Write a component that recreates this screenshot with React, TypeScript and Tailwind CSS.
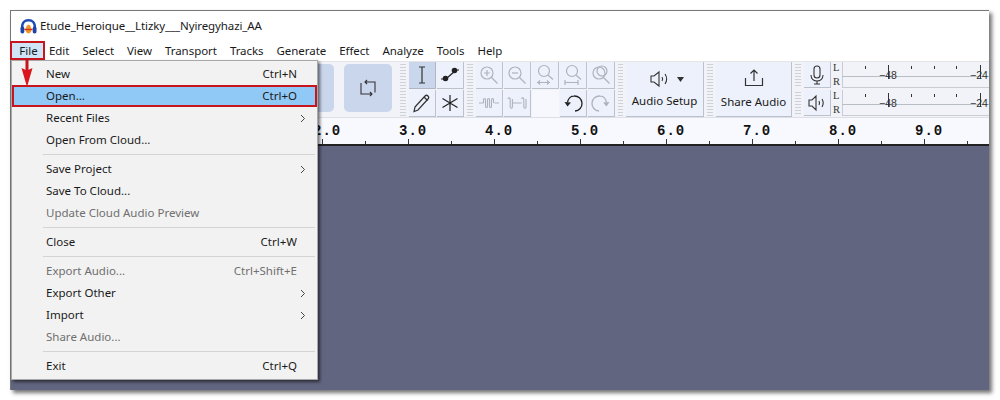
import React from "react";

const FONT = "font-['Noto_Sans','Open_Sans',sans-serif]";

type Entry = { label?: string; shortcut?: string; arrow?: boolean; disabled?: boolean; active?: boolean; sep?: boolean };
const menu: Entry[] = [
  { label: "New", shortcut: "Ctrl+N" },
  { label: "Open...", shortcut: "Ctrl+O", active: true },
  { label: "Recent Files", arrow: true },
  { label: "Open From Cloud..." },
  { sep: true },
  { label: "Save Project", arrow: true },
  { label: "Save To Cloud..." },
  { label: "Update Cloud Audio Preview", disabled: true },
  { sep: true },
  { label: "Close", shortcut: "Ctrl+W" },
  { sep: true },
  { label: "Export Audio...", shortcut: "Ctrl+Shift+E", disabled: true },
  { label: "Export Other", arrow: true },
  { label: "Import", arrow: true },
  { label: "Share Audio...", disabled: true },
  { sep: true },
  { label: "Exit", shortcut: "Ctrl+Q" },
];

const menus = ["Edit", "Select", "View", "Transport", "Tracks", "Generate", "Effect", "Analyze", "Tools", "Help"];

function Grip({ narrow }: { narrow?: boolean }) {
  return (
    <div className={`${narrow ? "w-[9px]" : "w-[10px]"} mx-px shrink-0 self-stretch bg-[#f1f3f8] flex flex-col justify-center gap-[2px] px-[2px] overflow-hidden`}>
      {Array.from({ length: 18 }).map((_, i) => (
        <div key={i} className="h-px shrink-0 bg-[#ced2d8]" />
      ))}
    </div>
  );
}

function Btn({ children, active, plain, tall }: { children?: React.ReactNode; active?: boolean; plain?: boolean; tall?: boolean }) {
  return (
    <div
      className={`w-[27px] ${tall ? "h-[27px]" : "h-[26px]"} flex items-center justify-center ${
        plain
          ? "bg-[#f6f8fd]"
          : active
          ? "bg-[#c9d6ec] border-b border-r border-[#aeb6c4]"
          : "bg-[#edf1fb] border-b border-r border-[#bcc2cc]"
      }`}
    >
      {children}
    </div>
  );
}

const ic = { width: 22, height: 22, viewBox: "0 0 22 22", fill: "none" } as const;
const G = "#adb3bc";

function ZoomIco({ kind }: { kind: "in" | "out" | "sel" | "fit" | "tog" }) {
  const low = kind === "sel" || kind === "fit";
  return (
    <svg {...ic} stroke={G} strokeWidth="1.2">
      <circle cx={low ? 10 : 9} cy={low ? 7 : 9} r={low ? 5.5 : 6} />
      <path d={low ? "M14 11l5 4.500" : "M13.5 13.5l6 6"} />
      {kind === "in" && <path d="M6 9h6M9 6v6" />}
      {kind === "out" && <path d="M6 9h6" />}
      {kind === "sel" && <path d="M3 18.500h13M6 16.500l-2 2 2 2M13 16.500l2 2-2 2" />}
      {kind === "fit" && <path d="M3 18.500h13M3 16v5M16 16v5" />}
      {kind === "tog" && <circle cx="12" cy="7" r="5" />}
    </svg>
  );
}

function LevelMeter() {
  return (
    <div className="flex h-[26px] flex-1 items-stretch">
      <div className="w-[9px] flex flex-col justify-between text-[10.5px] leading-[12px] font-['Liberation_Serif',serif] text-[#333]">
        <span>L</span>
        <span>R</span>
      </div>
      <div className="flex-1 relative">
        <svg width="147" height="26" className="block">
          <path d="M0.5 0v26" stroke="#c9ccd2" />
          <path d="M0 14.500h147" stroke="#b9bdc4" strokeWidth="1" />
          <path d="M0 25.500h147" stroke="#c9ccd2" />
          <path d="M23.500 4v3M69.500 4v3M92.500 4v3M114.500 4v3M46.500 3v14M138.500 3v14" stroke="#333" strokeWidth="1" />
        </svg>
        <span className="absolute left-[37px] top-[7px] text-[10.5px] leading-[12px] font-['Liberation_Sans',sans-serif] text-[#333]">−48</span>
        <span className="absolute left-[128px] top-[7px] text-[10.5px] leading-[12px] font-['Liberation_Sans',sans-serif] text-[#333]">−24</span>
      </div>
    </div>
  );
}

function Logo() {
  return (
    <svg width="17" height="15" viewBox="0 0 17 15" className="shrink-0">
      <path d="M2.200 10 C1.500 3 5 1.300 8.500 1.300 C12 1.300 15.500 3 14.800 10" fill="none" stroke="#1c49b4" strokeWidth="2.400" />
      <rect x="0.500" y="7.500" width="3.800" height="7" rx="1.800" fill="#1b45a8" />
      <rect x="12.700" y="7.500" width="3.800" height="7" rx="1.800" fill="#1b45a8" />
      <path d="M5 10.500L6 8.500 7 6.500 8.500 5.500 10 6.500 11 8.500 12 10.500 10.500 13.500 8.500 14.500 6.500 13.500z" fill="#f0942a" />
      <path d="M4.500 10.500h8" stroke="#d8261c" strokeWidth="1.200" />
    </svg>
  );
}

const rulerLabels = ["1.0", "2.0", "3.0", "4.0", "5.0", "6.0", "7.0", "8.0", "9.0"];

export default function App() {
  return (
    <div className={`${FONT} w-[1000px] h-[400px] bg-white overflow-hidden pt-[10px] pl-[10px]`}>
      <div className="relative w-[979px] h-[380px] flex flex-col bg-white border-l border-t border-[#777] shadow-[3px_3px_4px_rgba(0,0,0,0.55)]">
        {/* title */}
        <div className="h-[29px] shrink-0 flex items-center gap-[3px] pl-[9px] pt-[1px] text-[11.5px] text-[#1a1a1a]">
          <Logo />
          <span className="tracking-[-0.1px]">Etude_Heroique__Ltizky___Nyiregyhazi_AA</span>
        </div>
        {/* menu bar */}
        <div className="h-[21px] shrink-0 flex items-center text-[11.5px] text-[#1a1a1a] bg-white">
          <div className="w-[33px] h-[18px] flex items-center justify-center bg-[#cfe4f7] ml-[1px]">File</div>
          <div className="flex gap-[13px] ml-[4px] tracking-[-0.05px]">
            {menus.map((m) => (
              <span key={m}>{m}</span>
            ))}
          </div>
        </div>
        {/* toolbar */}
        <div className="h-[56px] shrink-0 flex items-start bg-[#f1f3f8] border-t border-[#e4e4e4]">
          <div className="flex-1 h-[51px] self-start flex items-center justify-end gap-[10px] pr-[5px]">
            <div className="w-[48px] h-[48px] rounded-[5px] bg-[#c9d6ec]" />
            <div className="w-[48px] h-[48px] rounded-[5px] bg-[#c9d6ec] flex items-center justify-center">
              <svg width="18" height="18" viewBox="0 0 18 18" fill="none" stroke="#333" strokeWidth="1.1">
                <path d="M2 4V15H13M11 13l2 2-2 2M16 13.500V3H6M8 1L6 3l2 2" />
              </svg>
            </div>
          </div>
          <Grip />
          <div className="grid grid-cols-[27px_27px] grid-rows-[27px_27px] gap-[1px] shrink-0">
            <Btn active tall>
              <svg {...ic} stroke="#333" strokeWidth="1.2"><path d="M8 3h6M8 19h6M11 3v16" /></svg>
            </Btn>
            <Btn tall>
              <svg {...ic} stroke="#222" strokeWidth="1.2">
                <path d="M2 15h4M8 14l8-7M16 6h4" />
                <circle cx="6.500" cy="14.500" r="2.200" fill="#222" />
                <circle cx="15.500" cy="6.500" r="2.200" fill="#222" />
              </svg>
            </Btn>
            <Btn tall>
              <svg {...ic} stroke="#333" strokeWidth="1.2">
                <path d="M4 15L14 4c1-1 2-1 3 0s1 2 0 3L7 18l-4 1.500z" />
                <path d="M13 5l3.500 3.500" />
              </svg>
            </Btn>
            <Btn tall>
              <svg {...ic} stroke="#222" strokeWidth="1.2"><path d="M11 3v16M3.500 6.500l15 9M18.500 6.500l-15 9" /></svg>
            </Btn>
          </div>
          <Grip />
          <div className="grid grid-cols-[repeat(5,27px)] grid-rows-[27px_27px] gap-[1px] shrink-0">
            <Btn tall><ZoomIco kind="in" /></Btn>
            <Btn tall><ZoomIco kind="out" /></Btn>
            <Btn tall><ZoomIco kind="sel" /></Btn>
            <Btn tall><ZoomIco kind="fit" /></Btn>
            <Btn tall><ZoomIco kind="tog" /></Btn>
            <Btn tall>
              <svg {...ic} stroke={G} strokeWidth="1.100">
                <path d="M1 11h4.500M16.500 11H21M5.500 11V7.500a1 1 0 0 1 2 0v7a1 1 0 0 0 2 0v-7a1 1 0 0 1 2 0v7a1 1 0 0 0 2 0v-7a1 1 0 0 1 2 0V11" />
              </svg>
            </Btn>
            <Btn tall>
              <svg {...ic} stroke={G} strokeWidth="1.100">
                <path d="M2 7a1.100 1.100 0 0 1 2.200 0v8a1.100 1.100 0 0 0 2.200 0V7M6.400 11h9.200M15.600 7a1.100 1.100 0 0 1 2.200 0v8a1.100 1.100 0 0 0 2.200 0V7" />
              </svg>
            </Btn>
            <Btn tall plain />
            <Btn tall>
              <svg {...ic} stroke="#222" strokeWidth="1.300"><path d="M5.500 10.500C6 7 8.500 4 12 4a7.500 7.500 0 0 1 1 15" /><path d="M2.500 10l3 4.500 3.500-4z" fill="#222" stroke="none" /></svg>
            </Btn>
            <Btn tall>
              <svg {...ic} stroke={G} strokeWidth="1.300"><path d="M16.500 10.500C16 7 13.500 4 10 4a7.500 7.500 0 0 0-1 15" /><path d="M19.500 10l-3 4.500-3.500-4z" fill={G} stroke="none" /></svg>
            </Btn>
          </div>
          <Grip narrow />
          <div className="w-[78px] h-[55px] shrink-0 bg-[#edf1fb] border-b border-r border-[#bcc2cc] flex flex-col items-center justify-between pt-[7px] pb-[8px] text-[11.5px] text-[#1a1a1a]">
            <div className="flex items-center gap-[6px] pl-[4px]">
              <svg width="22" height="20" viewBox="0 0 22 20" fill="none" stroke="#333" strokeWidth="1.100">
                <path d="M2 7h3l5-4v14l-5-4H2zM13 8c1 1.500 1 2.500 0 4M16 5c2 3 2 7 0 10" />
              </svg>
              <svg width="7" height="5" viewBox="0 0 7 5"><path d="M0 0h7L3.500 5z" fill="#333" /></svg>
            </div>
            <span className="leading-[14px]">Audio Setup</span>
          </div>
          <Grip />
          <div className="w-[76px] h-[55px] shrink-0 bg-[#edf1fb] border-b border-r border-[#bcc2cc] flex flex-col items-center justify-between pt-[6px] pb-[7px] text-[11.5px] text-[#1a1a1a]">
            <svg width="20" height="20" viewBox="0 0 20 20" fill="none" stroke="#333" strokeWidth="1.200">
              <path d="M10 13V2M6.500 5.500L10 2l3.500 3.500M1.500 10v7.500h17V10" />
            </svg>
            <span className="leading-[14px]">Share Audio</span>
          </div>
          <div className="flex flex-col gap-[2px] shrink-0 w-[197px]">
            <div className="flex items-center h-[26px]">
              <Grip />
              <Btn>
                <svg {...ic} stroke="#333" strokeWidth="1.100"><rect x="8" y="2" width="6" height="12" rx="3" /><path d="M5 11c0 8 12 8 12 0M11 17v3M8 20h6" /></svg>
              </Btn>
              <div className="w-[2px]" />
              <LevelMeter />
            </div>
            <div className="flex items-center h-[26px]">
              <Grip />
              <Btn>
                <svg {...ic} stroke="#333" strokeWidth="1.100"><path d="M3 8h3l4-4v14l-4-4H3zM13 9c.8 1.500.8 2.500 0 4M16 7c1.500 2.500 1.500 5.500 0 8" /></svg>
              </Btn>
              <div className="w-[2px]" />
              <LevelMeter />
            </div>
          </div>
        </div>
        {/* ruler */}
        <div className="relative h-[29px] shrink-0 bg-[#f8f9fe] border-t border-[#dcdfe5] border-b-2 border-b-[#222] overflow-hidden">
          <div className="flex pl-[216px] pt-[5px]">
            {rulerLabels.map((r) => (
              <div key={r} className="w-[86px] shrink-0 font-['Liberation_Mono',monospace] font-bold text-[14px] leading-[16px] tracking-[1px] text-[#111]">
                {r}
              </div>
            ))}
          </div>
          <svg width="979" height="6" className="absolute left-0 bottom-0 block">
            {Array.from({ length: 22 }).map((_, i) => {
              const x = 53.5 + i * 43;
              return <path key={i} d={`M${x} ${i % 2 === 0 ? 1 : 3}V6`} stroke="#333" strokeWidth="1" />;
            })}
          </svg>
        </div>
        {/* tracks */}
        <div className="flex-1 bg-[#626580]" />

        {/* File menu */}
        <div className="absolute left-0 top-[49px] w-[307px] h-[320px] bg-[#f2f2f2] border border-[#a9a9a9] shadow-[2px_2px_3px_rgba(0,0,0,0.55)] pt-[2px] pl-[1px] text-[11.5px] text-[#1a1a1a]">
          {menu.map((m, i) =>
            m.sep ? (
              <div key={i} className="h-[7px] ml-[30px] mr-[2px] flex items-center">
                <div className="h-px w-full bg-[#d4d4d4]" />
              </div>
            ) : (
              <div
                key={i}
                className={`h-[22px] flex items-center pl-[33px] pr-[20px] ${m.active ? "bg-[#90c8f6]" : ""} ${
                  m.disabled ? "text-[#6f6f6f]" : ""
                }`}
              >
                <span className="flex-1">{m.label}</span>
                {m.shortcut && <span>{m.shortcut}</span>}
                {m.arrow && (
                  <svg width="6" height="9" viewBox="0 0 6 9" fill="none" stroke="#444" className="-mr-[9px]">
                    <path d="M1 1l3.500 3.500L1 8" />
                  </svg>
                )}
              </div>
            )
          )}
        </div>
        {/* annotation */}
        <div className="absolute -left-px top-[30px] w-[35px] h-[19px] border-2 border-[#c8141c]" />
        <div className="absolute left-[1px] top-[74px] w-[305px] h-[22px] border-2 border-[#c8141c]" />
        <svg width="12" height="30" viewBox="0 0 12 30" className="absolute left-[10px] top-[48px]">
          <path d="M4.500 0h3v12h-3z" fill="#c8141c" />
          <path d="M0.500 9l5.500 2.500L11.500 9 6 28z" fill="#d8161c" />
        </svg>
      </div>
    </div>
  );
}
